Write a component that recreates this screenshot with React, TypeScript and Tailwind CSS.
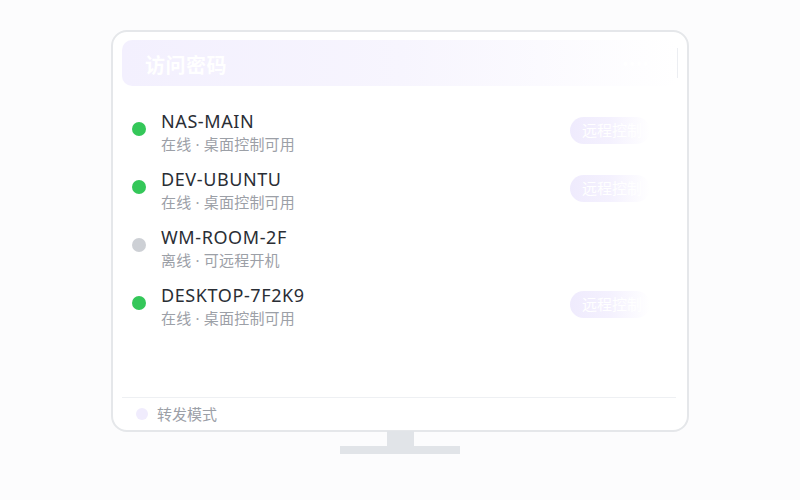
import React from "react";

const devices = [
  { name: "NAS-MAIN", sub: "在线 · 桌面控制可用", online: true },
  { name: "DEV-UBUNTU", sub: "在线 · 桌面控制可用", online: true },
  { name: "WM-ROOM-2F", sub: "离线 · 可远程开机", online: false },
  { name: "DESKTOP-7F2K9", sub: "在线 · 桌面控制可用", online: true },
];

export default function App() {
  return (
    <div
      className="w-[800px] h-[500px] bg-[#fcfcfd] flex flex-col items-center pt-[30px]"
      style={{ fontFamily: '"Noto Sans", "Noto Sans CJK SC", sans-serif' }}
    >
      <div className="w-[578px] h-[402px] border-2 border-[#e5e7ea] rounded-[16px] bg-white px-[9px] pt-[8px] flex flex-col">
        <div className="h-[46px] rounded-[10px] bg-gradient-to-r from-[#f3f0fe] via-[#f7f5fe] to-white flex items-center justify-between pl-[23px]">
          <span className="text-[20px] font-bold text-white leading-none tracking-[0.5px] mt-[5px]">访问密码</span>
          <div className="h-[30px] border-r border-[#eceef2] flex items-center pr-[28px] text-white text-[18px]">
            ••••
          </div>
        </div>
        <div className="flex flex-col gap-[14px] mt-[24px]">
          {devices.map((d) => (
            <div key={d.name} className="flex items-center">
              <div
                className={
                  "w-[14px] h-[14px] rounded-full ml-[10px] mr-[15px] -mt-[6px] " +
                  (d.online ? "bg-[#34c759]" : "bg-[#cdd0d5]")
                }
              />
              <div className="flex flex-col">
                <div className="text-[18px] leading-[22px] text-[#2a2e35] tracking-[0.6px]">{d.name}</div>
                <div className="text-[15px] leading-[20px] mt-[2px] text-[#9ca0a7] tracking-[0.2px]">{d.sub}</div>
              </div>
              {d.online && (
                <div className="ml-auto mr-[28px] -mt-[3px] h-[27px] w-[80px] rounded-full bg-gradient-to-r from-[#efebfd] via-[#f4f1fe] to-transparent flex items-center pl-[12px] text-[15px] text-white">
                  远程控制
                </div>
              )}
            </div>
          ))}
        </div>
        <div className="mt-auto border-t border-[#eef0f3] h-[33px] flex items-center pl-[14px] mr-[2px]">
          <div className="w-[12px] h-[12px] rounded-full bg-[#f0ecfd]" />
          <span className="ml-[9px] text-[15px] text-[#9ca0a7]">转发模式</span>
        </div>
      </div>
      <div className="w-[27px] h-[15px] bg-[#e1e4e8] -mt-[1px]" />
      <div className="w-[120px] h-[8px] bg-[#e1e4e8]" />
    </div>
  );
}
